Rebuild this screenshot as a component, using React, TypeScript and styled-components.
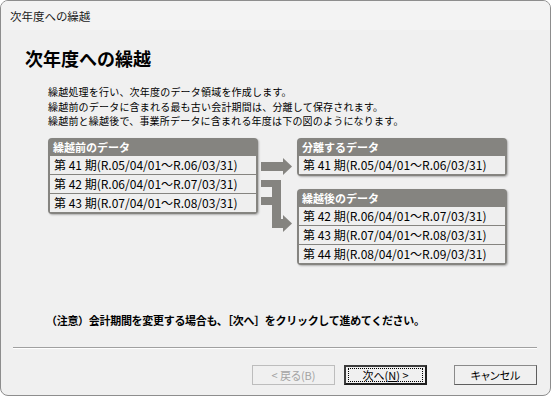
import React from 'react'
import styled, { createGlobalStyle } from 'styled-components'

const GlobalStyle = createGlobalStyle`
  html, body {
    margin: 0;
    padding: 0;
    background: #ffffff;
  }
  body {
    font-family: "Noto Sans CJK JP", "Noto Sans", sans-serif;
    color: #000;
  }
`

const FRAME = '#858480'

const Window = styled.div`
  width: 551px;
  height: 396px;
  box-sizing: border-box;
  border: 1px solid #8d8d8d;
  border-radius: 8px;
  background: #f0f0f0;
  overflow: hidden;
  display: flex;
  flex-direction: column;
`

const TitleBar = styled.div`
  height: 29px;
  flex-shrink: 0;
  background: #f3f3f3;
  display: flex;
  align-items: center;
  padding-left: 9px;
  font-size: 11.5px;
  color: #1b1b1b;
  font-feature-settings: "palt";
`

const Heading = styled.h1`
  margin: 17px 0 0 24px;
  height: 22px;
  line-height: 22px;
  font-size: 18px;
  font-weight: bold;
`

const Lead = styled.div`
  margin: 16px 0 0 47px;
  display: flex;
  flex-direction: column;
`

const LeadLine = styled.div`
  height: 14.5px;
  line-height: 14.5px;
  font-size: 10px;
  letter-spacing: 0.2px;
  white-space: nowrap;
`

const Diagram = styled.div`
  margin: 9.5px 0 0 47px;
  display: flex;
  align-items: flex-start;
`

const Column = styled.div`
  display: flex;
  flex-direction: column;
  gap: 13px;
`

const DataBox = styled.div`
  width: 210px;
  box-sizing: border-box;
  background: ${FRAME};
  border-radius: 4px;
  padding: 0 2px 2px;
  box-shadow: 1px 1px 2px rgba(0, 0, 0, 0.28);
`

const BoxTitle = styled.div`
  height: 18px;
  line-height: 18px;
  padding-left: 3px;
  color: #ffffff;
  font-size: 11px;
  font-weight: bold;
`

const Row = styled.div`
  height: 18px;
  line-height: 18px;
  padding-left: 4px;
  background: #efefef;
  font-size: 12px;
  white-space: nowrap;

  & + & {
    margin-top: 1px;
  }
`

const ArrowArea = styled.svg`
  display: block;
  flex-shrink: 0;
`

const Note = styled.div`
  margin: 48px 0 0 45px;
  height: 14px;
  line-height: 14px;
  font-size: 11px;
  font-weight: bold;
  letter-spacing: -0.3px;
  white-space: nowrap;
`

const Separator = styled.div`
  margin: 20px 13px 0 12px;
  height: 1px;
  background: #a0a0a0;
  border-bottom: 1px solid #ffffff;
`

const ButtonBar = styled.div`
  margin: 16px 13px 0 0;
  display: flex;
  justify-content: flex-end;
  gap: 9px;
`

const Button = styled.button<{ $primary?: boolean; $gapLeft?: number }>`
  width: 83px;
  height: 20px;
  box-sizing: border-box;
  margin: 0 0 0 ${p => p.$gapLeft ?? 0}px;
  padding: 0;
  background: #f0f0f0;
  border: ${p => (p.$primary ? '2px solid #3c3c3c' : '1px solid #8a8a8a')};
  border-right-color: ${p => (p.$primary ? '#1e1e1e' : '#5e5e5e')};
  border-bottom-color: ${p => (p.$primary ? '#1e1e1e' : '#5e5e5e')};
  font-family: "Noto Sans CJK JP", sans-serif;
  font-size: 11px;
  font-feature-settings: "palt";
  color: #000;
  display: flex;
  align-items: center;
  justify-content: center;

  &:disabled {
    color: #a3a3a3;
    border-color: #bdbdbd;
  }
`

const FocusRing = styled.span`
  box-sizing: border-box;
  width: 75px;
  height: 14px;
  border: 1px dotted #000;
  display: flex;
  align-items: center;
  justify-content: center;
`

const Key = styled.u`
  text-decoration: underline;
`

const before = ['第 41 期(R.05/04/01～R.06/03/31)', '第 42 期(R.06/04/01～R.07/03/31)', '第 43 期(R.07/04/01～R.08/03/31)']
const separated = ['第 41 期(R.05/04/01～R.06/03/31)']
const after = ['第 42 期(R.06/04/01～R.07/03/31)', '第 43 期(R.07/04/01～R.08/03/31)', '第 44 期(R.08/04/01～R.09/03/31)']

const lead = [
  '繰越処理を行い、次年度のデータ領域を作成します。',
  '繰越前のデータに含まれる最も古い会計期間は、分離して保存されます。',
  '繰越前と繰越後で、事業所データに含まれる年度は下の図のようになります。',
]

function Box({ title, rows }: { title: string; rows: string[] }) {
  return (
    <DataBox>
      <BoxTitle>{title}</BoxTitle>
      {rows.map(r => (
        <Row key={r}>{r}</Row>
      ))}
    </DataBox>
  )
}

function Arrows() {
  return (
    <ArrowArea width="39" height="127" viewBox="0 0 39 127">
      <g fill={FRAME}>
        <rect x="3" y="24" width="23" height="9" />
        <polygon points="25,20 34,28.5 25,37" />
        <rect x="3" y="42" width="20" height="7" />
        <rect x="14" y="42" width="9" height="48" />
        <rect x="3" y="59" width="11" height="8" />
        <rect x="14" y="81" width="12" height="9" />
        <polygon points="25,77 34,85.5 25,94" />
      </g>
    </ArrowArea>
  )
}

export default function App() {
  return (
    <>
      <GlobalStyle />
      <Window>
        <TitleBar>次年度への繰越</TitleBar>
        <Heading>次年度への繰越</Heading>
        <Lead>
          {lead.map(l => (
            <LeadLine key={l}>{l}</LeadLine>
          ))}
        </Lead>
        <Diagram>
          <Box title="繰越前のデータ" rows={before} />
          <Arrows />
          <Column>
            <Box title="分離するデータ" rows={separated} />
            <Box title="繰越後のデータ" rows={after} />
          </Column>
        </Diagram>
        <Note>（注意）会計期間を変更する場合も、［次へ］をクリックして進めてください。</Note>
        <Separator />
        <ButtonBar>
          <Button disabled>&lt; 戻る(B)</Button>
          <Button $primary>
            <FocusRing>
              次へ(<Key>N</Key>) &gt;
            </FocusRing>
          </Button>
          <Button $gapLeft={18}>キャンセル</Button>
        </ButtonBar>
      </Window>
    </>
  )
}
